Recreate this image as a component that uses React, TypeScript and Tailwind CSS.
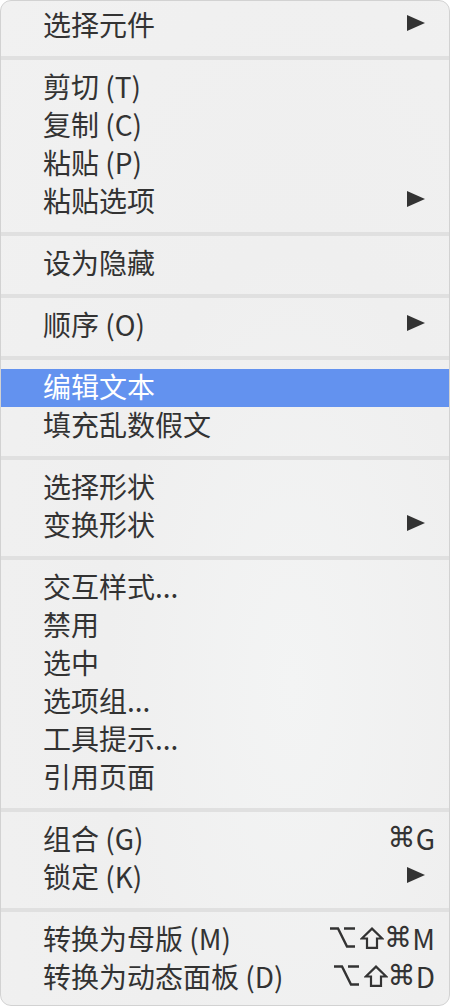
import React from 'react';

type Item =
  | { kind: 'sep' }
  | { kind: 'item'; label: string; sub?: boolean; keys?: string; active?: boolean };

const items: Item[] = [
  { kind: 'item', label: '选择元件', sub: true },
  { kind: 'sep' },
  { kind: 'item', label: '剪切 (T)' },
  { kind: 'item', label: '复制 (C)' },
  { kind: 'item', label: '粘贴 (P)' },
  { kind: 'item', label: '粘贴选项', sub: true },
  { kind: 'sep' },
  { kind: 'item', label: '设为隐藏' },
  { kind: 'sep' },
  { kind: 'item', label: '顺序 (O)', sub: true },
  { kind: 'sep' },
  { kind: 'item', label: '编辑文本', active: true },
  { kind: 'item', label: '填充乱数假文' },
  { kind: 'sep' },
  { kind: 'item', label: '选择形状' },
  { kind: 'item', label: '变换形状', sub: true },
  { kind: 'sep' },
  { kind: 'item', label: '交互样式...' },
  { kind: 'item', label: '禁用' },
  { kind: 'item', label: '选中' },
  { kind: 'item', label: '选项组...' },
  { kind: 'item', label: '工具提示...' },
  { kind: 'item', label: '引用页面' },
  { kind: 'sep' },
  { kind: 'item', label: '组合 (G)', keys: '⌘G' },
  { kind: 'item', label: '锁定 (K)', sub: true },
  { kind: 'sep' },
  { kind: 'item', label: '转换为母版 (M)', keys: '⌥⇧⌘M' },
  { kind: 'item', label: '转换为动态面板 (D)', keys: '⌥⇧⌘D' },
];

const SubArrow = () => (
  <svg width="18" height="16" viewBox="0 0 18 16" className="mr-[2px] mt-[-2px]">
    <path d="M0 0 L18 8 L0 16 Z" fill="currentColor" />
  </svg>
);

// option key
const OptKey = () => (
  <svg width="25" height="21" viewBox="0 0 25 21" fill="none" stroke="currentColor" strokeWidth="2.4">
    <path d="M0 1.5 H8 L17 19.5 H25" />
    <path d="M14 1.5 H25" />
  </svg>
);

// shift key
const ShiftKey = () => (
  <svg width="24" height="22" viewBox="0 0 24 22" fill="none" stroke="currentColor" strokeWidth="2.2" className="ml-[5px]">
    <path d="M12 1.6 L1.8 11.5 H7 V20.8 H17 V11.5 H22.2 Z" />
  </svg>
);

const Keys = ({ keys }: { keys: string }) => (
  <span className="flex items-center mr-[-8px]">
    {Array.from(keys).map((k, i) =>
      k === '⌥' ? (
        <OptKey key={i} />
      ) : k === '⇧' ? (
        <ShiftKey key={i} />
      ) : k === '⌘' ? (
        <span key={i} style={{ fontFamily: '"DejaVu Sans", sans-serif' }}>
          {k}
        </span>
      ) : (
        <span key={i}>{k}</span>
      )
    )}
  </span>
);

export default function App() {
  return (
    <div className="w-[450px] h-[1006px] bg-white">
      <div
        className="w-full h-full rounded-[11px] border border-[#d2d2d2] overflow-hidden pt-[6px] text-[#333333] bg-[radial-gradient(ellipse_at_65%_68%,#f3f4f4_0%,#efefef_45%,#f1f1f1_100%)]"
        style={{ fontFamily: '"Noto Sans CJK SC", "Noto Sans", "DejaVu Sans", sans-serif' }}
      >
        {items.map((it, i) =>
          it.kind === 'sep' ? (
            <div key={i} className="h-[24px] pt-[11px]">
              <div className="h-[4px] bg-[#e0e0e0]" />
            </div>
          ) : (
            <div
              key={i}
              className={`h-[38px] flex items-center justify-between pl-[42px] pr-[22px] pb-[5px] text-[28px] leading-none ${
                it.active ? 'bg-[#6392ef] text-white' : ''
              }`}
            >
              <span>{it.label}</span>
              {it.sub && <SubArrow />}
              {it.keys && <Keys keys={it.keys} />}
            </div>
          )
        )}
      </div>
    </div>
  );
}
